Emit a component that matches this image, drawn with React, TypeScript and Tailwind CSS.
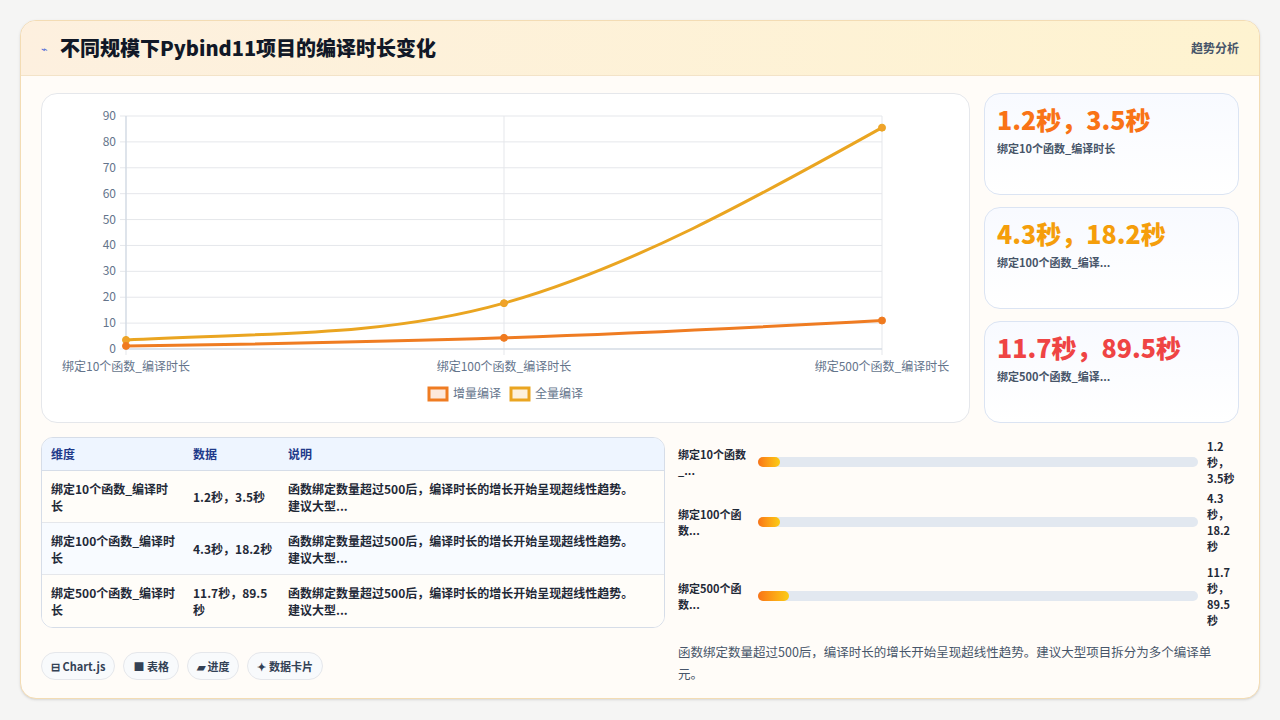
const font = { fontFamily: '"Noto Sans CJK SC", "Noto Sans", sans-serif' }

const rows = [
  { name: '绑定10个函数_编译时长', short: '绑定10个函数_...', val: '1.2秒，3.5秒', pct: 5, color: 'text-[#f97316]' },
  { name: '绑定100个函数_编译时长', short: '绑定100个函数...', val: '4.3秒，18.2秒', pct: 5, color: 'text-[#f59e0b]' },
  { name: '绑定500个函数_编译时长', short: '绑定500个函数...', val: '11.7秒，89.5秒', pct: 7, color: 'text-[#ef4444]' },
]
const note = '函数绑定数量超过500后，编译时长的增长开始呈现超线性趋势。建议大型项目拆分为多个编译单元。'

function Chart() {
  const x0 = 84, x1 = 840, y0 = 255, yTop = 22
  const y = (v: number) => y0 - ((y0 - yTop) * v) / 90
  const xs = [x0, (x0 + x1) / 2, x1]
  const inc = [1.2, 4.3, 11]
  const full = [3.5, 17.7, 85.5]
  // smooth curve: tangents from neighbouring slopes
  const path = (vals: number[]) => {
    const p = vals.map((v, i) => [xs[i], y(v)])
    const h = (x1 - x0) / 2
    const s0 = (p[1][1] - p[0][1]) / h
    const s1 = (p[2][1] - p[1][1]) / h
    const t0 = s0 * 0.6, t1 = (s0 + s1) / 2, t2 = s1 * 1.2
    const d = h / 3
    return `M${p[0][0]},${p[0][1]} C${p[0][0] + d},${p[0][1] + t0 * d} ${p[1][0] - d},${p[1][1] - t1 * d} ${p[1][0]},${p[1][1]} C${p[1][0] + d},${p[1][1] + t1 * d} ${p[2][0] - d},${p[2][1] - t2 * d} ${p[2][0]},${p[2][1]}`
  }
  return (
    <svg width="928" height="329" viewBox="0 0 928 329" style={font}>
      {[0, 10, 20, 30, 40, 50, 60, 70, 80, 90].map((v) => (
        <g key={v}>
          <line x1={x0 - 6} x2={x1} y1={y(v)} y2={y(v)} stroke="#e5e7eb" />
          <text x={x0 - 10} y={y(v) + 4} textAnchor="end" fontSize="12" fill="#64748b">{v}</text>
        </g>
      ))}
      {xs.map((x) => <line key={x} x1={x} x2={x} y1={yTop} y2={y0 + 6} stroke="#e5e7eb" />)}
      <line x1={x0} x2={x0} y1={yTop} y2={y0} stroke="#cbd5e1" />
      <line x1={x0} x2={x1} y1={y0} y2={y0} stroke="#cbd5e1" />
      {['绑定10个函数_编译时长', '绑定100个函数_编译时长', '绑定500个函数_编译时长'].map((t, i) => (
        <text key={t} x={xs[i]} y={277} textAnchor="middle" fontSize="12" fill="#64748b">{t}</text>
      ))}
      <path d={path(full)} fill="none" stroke="#eaa521" strokeWidth="3" />
      <path d={path(inc)} fill="none" stroke="#ef7c22" strokeWidth="3" />
      {full.map((v, i) => <circle key={i} cx={xs[i]} cy={y(v)} r="3.5" fill="#f0a22a" stroke="#eaa521" />)}
      {inc.map((v, i) => <circle key={i} cx={xs[i]} cy={y(v)} r="3.5" fill="#f07a1e" stroke="#ef7c22" />)}
      <rect x="387" y="294" width="18" height="12" fill="#fde9dc" stroke="#ef7c22" strokeWidth="3" />
      <text x="411" y="304" fontSize="12" fill="#64748b">增量编译</text>
      <rect x="469" y="294" width="18" height="12" fill="#fdf1dc" stroke="#eaa521" strokeWidth="3" />
      <text x="493" y="304" fontSize="12" fill="#64748b">全量编译</text>
    </svg>
  )
}

export default function App() {
  return (
    <div className="w-[1280px] h-[720px] bg-[#f5f5f4] p-5" style={font}>
      <div className="h-[679px] rounded-2xl border border-[#f3dcb4] bg-[#fffcf8] overflow-hidden shadow-sm flex flex-col">
        <div className="h-[55px] shrink-0 flex items-center justify-between px-5 bg-gradient-to-r from-[#fdf0df] to-[#fef3d0] border-b border-[#f3e3c8]">
          <div className="flex items-center gap-3">
            <span className="text-[11px] text-[#4f6bd8]">⌁</span>
            <span className="text-[20px] font-black text-[#111827]">不同规模下Pybind11项目的编译时长变化</span>
          </div>
          <span className="text-xs font-semibold text-[#475569]">趋势分析</span>
        </div>
        <div className="flex-1 px-5 pt-[17px] flex flex-col">
          <div className="flex gap-[14px]">
            <div className="w-[929px] h-[330px] rounded-2xl border border-[#e5e7eb] bg-white overflow-hidden"><Chart /></div>
            <div className="flex-1 flex flex-col gap-[12px]">
              {rows.map((r) => (
                <div key={r.name} className="h-[102px] rounded-2xl border border-[#dbe4f3] bg-gradient-to-b from-[#f8faff] to-white px-3 pt-2">
                  <div className={`text-[25px] font-black leading-[34px] ${r.color}`}>{r.val}</div>
                  <div className="text-[11px] font-semibold text-[#475569] mt-1 truncate">{r.name.length > 12 ? r.name.slice(0, 11) + '...' : r.name}</div>
                </div>
              ))}
            </div>
          </div>
          <div className="flex gap-[13px] mt-[14px]">
            <div className="w-[624px] flex flex-col">
              <div className="rounded-xl border border-[#d6dde8] overflow-hidden bg-white text-xs font-semibold text-[#1f2937]">
                <div className="grid grid-cols-[142px_95px_1fr] h-[33px] items-center bg-[#eef5ff] text-[#1e3a8a] border-b border-[#d6dde8] px-[9px]">
                  <div>维度</div><div>数据</div><div>说明</div>
                </div>
                {rows.map((r, i) => (
                  <div key={r.name} className={`grid grid-cols-[142px_95px_1fr] h-[52px] items-center px-[9px] leading-[17px] ${i === 1 ? 'bg-[#f8fbff]' : 'bg-[#fffdf9]'} ${i < 2 ? 'border-b border-[#e5e7eb]' : ''}`}>
                    <div className="pr-4">{r.name}</div>
                    <div className="pr-3">{r.val}</div>
                    <div className="pr-3">函数绑定数量超过500后，编译时长的增长开始呈现超线性趋势。建议大型...</div>
                  </div>
                ))}
              </div>
              <div className="flex gap-2 mt-[24px]">
                {['⊟ Chart.js', '■ 表格', '▰ 进度', '✦ 数据卡片'].map((c) => (
                  <span key={c} className="h-[28px] px-[9px] flex items-center rounded-full border border-[#e5e7eb] bg-[#f8fafc] text-[11px] font-semibold text-[#334155]">{c}</span>
                ))}
              </div>
            </div>
            <div className="flex-1 flex flex-col">
              {rows.map((r, i) => (
                <div key={r.name} className={`flex items-center ${i === 0 ? 'h-[50px]' : 'h-[70px]'} ${i === 1 ? 'mb-[4px]' : ''}`}>
                  <div className="w-[80px] text-[11px] font-semibold text-[#1f2937] leading-[16px] pr-1">{r.short}</div>
                  <div className="w-[440px] h-[10px] rounded-full bg-[#e2e8f0]">
                    <div className="h-full rounded-full bg-gradient-to-r from-[#f97316] to-[#facc15]" style={{ width: `${r.pct}%` }} />
                  </div>
                  <div className="w-[40px] pl-[9px] text-[11px] font-semibold text-[#1f2937] leading-[16px]">{r.val}</div>
                </div>
              ))}
              <p className="mt-[10px] text-[12.5px] text-[#475569] leading-[22px] pr-4">{note}</p>
            </div>
          </div>
        </div>
      </div>
    </div>
  )
}
